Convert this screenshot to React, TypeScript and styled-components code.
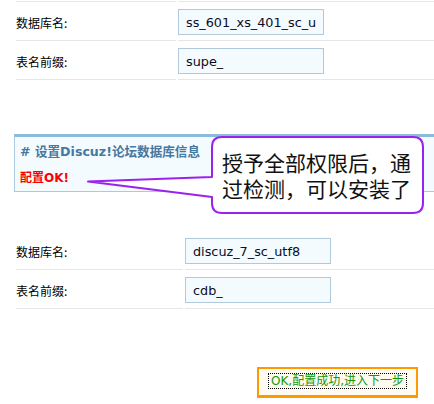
import styled, { createGlobalStyle } from 'styled-components';

const GlobalStyle = createGlobalStyle`
  html, body {
    margin: 0;
    padding: 0;
    overflow: hidden;
    background: #fff;
  }

  body {
    font-family: "DejaVu Sans", "Noto Sans CJK SC", sans-serif;
    font-size: 12px;
    color: #000;
  }
`;

const Page = styled.div`
  position: relative;
  width: 434px;
  height: 404px;
  padding-top: 1px;
  box-sizing: border-box;
`;

const FormTable = styled.div<{ $top?: number }>`
  margin-top: ${(p) => p.$top ?? 0}px;
`;

const Row = styled.div<{ $labelWidth: number; $ruleTop?: boolean }>`
  display: grid;
  grid-template-columns: ${(p) => p.$labelWidth}px 1fr;
  column-gap: 2px;
  padding-left: 16px;

  & > div {
    border-bottom: 1px solid #e6e6e6;
    border-top: ${(p) => (p.$ruleTop ? '1px solid #e6e6e6' : 'none')};
    padding: 7px 0 5px;
    display: flex;
    align-items: center;
    min-height: 26px;
  }
`;

const Label = styled.div`
  font-family: "Noto Sans CJK SC", sans-serif;
  font-size: 12px;
`;

const Field = styled.div``;

const TextInput = styled.input`
  width: 146px;
  height: 26px;
  box-sizing: border-box;
  border: 1px solid #b1c9d8;
  background: #f4fbff;
  padding: 0 7px;
  margin: 0;
  font-family: "DejaVu Sans", sans-serif;
  font-size: 12.8px;
  color: #0c0c20;
  outline: none;
`;

const InfoBox = styled.div`
  margin: 54px 0 0 14px;
  border-top: 3px solid #8bbbd7;
  border-left: 1px solid #aacadf;
  border-bottom: 1px solid #aacadf;
  background: #f4fbfe;
  padding: 7px 0 5px 5px;
`;

const InfoTitle = styled.div`
  font-weight: bold;
  font-size: 12.6px;
  line-height: 16px;
  color: #47789f;
`;

const StatusOk = styled.div`
  margin-top: 10px;
  font-weight: bold;
  line-height: 16px;
  color: #ff0000;
`;

const Actions = styled.div`
  display: flex;
  justify-content: flex-end;
  padding-right: 16px;
  margin-top: 58px;
`;

const NextButton = styled.button`
  width: 161px;
  height: 31px;
  box-sizing: border-box;
  border: 2px solid #ff9900;
  border-bottom-width: 3px;
  background: #fffbf0;
  padding: 4px 0 0;
  margin: 0;
  display: flex;
  justify-content: center;
  align-items: flex-start;
  font-family: "DejaVu Sans", "Noto Sans CJK SC", sans-serif;
  font-size: 12px;
  color: #0d9a0d;
  cursor: pointer;
`;

const FocusRing = styled.span`
  display: block;
  width: 139px;
  box-sizing: border-box;
  border: 1px dotted #000;
  line-height: 14px;
  text-align: center;
  white-space: nowrap;
`;

const Callout = styled.div`
  position: absolute;
  left: 86px;
  top: 135px;
  width: 340px;
  height: 80px;
`;

const CalloutShape = styled.svg`
  position: absolute;
  inset: 0;
`;

const CalloutText = styled.div`
  position: absolute;
  left: 136px;
  top: 14px;
  width: 196px;
  font-family: "Noto Sans CJK SC", sans-serif;
  font-size: 21px;
  line-height: 26px;
  color: #111;
`;

const CalloutLine = styled.div`
  height: 26px;
  white-space: nowrap;
`;

type TField = { label: string; value: string };

const FieldRows = ({ fields, labelWidth, ruleTop }: { fields: TField[]; labelWidth: number; ruleTop?: boolean }) => (
  <>
    {fields.map((f, i) => (
      <Row key={f.label} $labelWidth={labelWidth} $ruleTop={ruleTop && i === 0}>
        <Label>{f.label}</Label>
        <Field>
          <TextInput readOnly defaultValue={f.value} />
        </Field>
      </Row>
    ))}
  </>
);

export default function App() {
  return (
    <>
      <GlobalStyle />
      <Page>
        <FormTable>
          <FieldRows
            labelWidth={160}
            ruleTop
            fields={[
              { label: '数据库名:', value: 'ss_601_xs_401_sc_utf8' },
              { label: '表名前缀:', value: 'supe_' },
            ]}
          />
        </FormTable>

        <InfoBox>
          <InfoTitle># 设置Discuz!论坛数据库信息</InfoTitle>
          <StatusOk>配置OK!</StatusOk>
        </InfoBox>

        <FormTable $top={39}>
          <FieldRows
            labelWidth={167}
            fields={[
              { label: '数据库名:', value: 'discuz_7_sc_utf8' },
              { label: '表名前缀:', value: 'cdb_' },
            ]}
          />
        </FormTable>

        <Actions>
          <NextButton type="button">
            <FocusRing>OK,配置成功,进入下一步</FocusRing>
          </NextButton>
        </Actions>

        <Callout>
          <CalloutShape width="340" height="80" viewBox="0 0 340 80">
            <path
              d="M136 2 H327 Q337 2 337 12 V68 Q337 78 327 78 H136 Q126 78 126 68 V62 L2 46.5 L126 42 V12 Q126 2 136 2 Z"
              fill="#fff"
              stroke="#9b22ee"
              strokeWidth="2"
              strokeLinejoin="round"
            />
          </CalloutShape>
          <CalloutText>
            <CalloutLine>授予全部权限后，通</CalloutLine>
            <CalloutLine>过检测，可以安装了</CalloutLine>
          </CalloutText>
        </Callout>
      </Page>
    </>
  );
}
